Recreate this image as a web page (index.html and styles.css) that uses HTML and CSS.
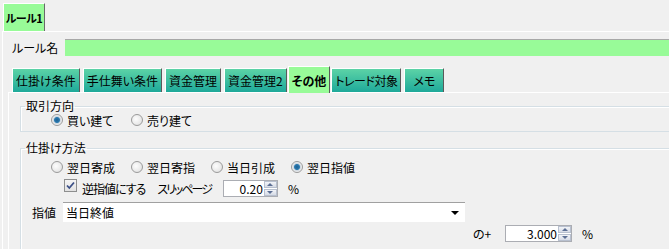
FILE: index.html
```html
<!DOCTYPE html>
<html>
<head>
    <title>ルール設定</title>
    <link rel="stylesheet" href="styles.css">
</head>
<body>
<div class="window">
    <div class="tabstrip">
        <div class="rule-tab">ルール1</div>
    </div>
    <div class="page">
        <div class="name-row">
            <span class="name-label">ルール名</span>
            <div class="name-input"></div>
        </div>
        <div class="tab-control">
            <div class="subtabs">
                <div class="subtab">仕掛け条件</div>
                <div class="subtab">手仕舞い条件</div>
                <div class="subtab">資金管理</div>
                <div class="subtab">資金管理2</div>
                <div class="subtab active">その他</div>
                <div class="subtab tight">トレード対象</div>
                <div class="subtab memo">メモ</div>
            </div>
            <div class="subpage">
                <fieldset class="group group-direction">
                    <legend>取引方向</legend>
                    <div class="radio-row">
                        <label class="radio checked"><span class="radio-mark"></span>買い建て</label>
                        <label class="radio"><span class="radio-mark"></span>売り建て</label>
                    </div>
                </fieldset>
                <fieldset class="group group-entry">
                    <legend>仕掛け方法</legend>
                    <div class="radio-row">
                        <label class="radio"><span class="radio-mark"></span>翌日寄成</label>
                        <label class="radio"><span class="radio-mark"></span>翌日寄指</label>
                        <label class="radio"><span class="radio-mark"></span>当日引成</label>
                        <label class="radio checked"><span class="radio-mark"></span>翌日指値</label>
                    </div>
                    <div class="stop-row">
                        <span class="checkbox">
                            <svg width="11" height="11" viewBox="0 0 11 11"><path d="M2 5.5 L4.3 8 L9 2.5" fill="none" stroke="#3b4f86" stroke-width="1.8"/></svg>
                        </span>
                        <span class="stop-label">逆指値にする</span>
                        <span class="slip-label">スリッページ</span>
                        <div class="spin spin-slip">
                            <span class="spin-value">0.20</span>
                            <span class="spin-buttons"><span class="spin-up"></span><span class="spin-down"></span></span>
                        </div>
                        <span class="unit">%</span>
                    </div>
                    <div class="limit-row">
                        <span class="limit-label">指値</span>
                        <div class="combo">
                            <span class="combo-text">当日終値</span>
                            <span class="combo-arrow"></span>
                        </div>
                    </div>
                    <div class="plus-row">
                        <span class="plus-label">の+</span>
                        <div class="spin spin-plus">
                            <span class="spin-value">3.000</span>
                            <span class="spin-buttons"><span class="spin-up"></span><span class="spin-down"></span></span>
                        </div>
                        <span class="unit">%</span>
                    </div>
                </fieldset>
            </div>
        </div>
    </div>
</div>
</body>
</html>
```

FILE: styles.css
```css
body {
    font-family: "Noto Sans CJK JP", "Noto Sans", sans-serif;
    font-size: 12px;
    font-feature-settings: "palt";
    background-color: #f0f0f0;
    color: #000;
    margin: 0;
    padding: 0;
    width: 669px;
    height: 249px;
    overflow: hidden;
}

.window {
    width: 760px;
}

.tabstrip {
    height: 31px;
    padding: 3px 0 0 3px;
    box-sizing: border-box;
    display: flex;
}

.rule-tab {
    width: 42px;
    height: 28px;
    box-sizing: border-box;
    background-color: #98fb98;
    border-top: 1px solid #fff;
    border-left: 1px solid #fff;
    border-right: 1px solid #696969;
    font-weight: bold;
    font-size: 11px;
    letter-spacing: -0.5px;
    white-space: nowrap;
    display: flex;
    align-items: center;
    justify-content: center;
}

.page {
    margin-left: 2px;
    border-top: 1px solid #fff;
    border-left: 1px solid #fff;
}

.name-row {
    display: flex;
    align-items: center;
    margin-top: 7px;
    padding-left: 9px;
}

.name-label {
    width: 53px;
}

.name-input {
    flex: 1;
    height: 17px;
    box-sizing: border-box;
    background-color: #98fb98;
    border-top: 1px solid #a8a8a8;
}

.tab-control {
    margin-top: 9px;
    margin-left: 5px;
}

.subtabs {
    display: flex;
    align-items: flex-end;
    height: 27px;
    padding-left: 4px;
}

.subtab {
    height: 24px;
    box-sizing: border-box;
    padding: 0 3px;
    margin-right: 3px;
    line-height: 23px;
    background: linear-gradient(#5cd3a6, #1ea99a);
    border-top: 1px solid #fff;
    border-left: 1px solid #fff;
    border-right: 1px solid #5a5a5a;
    white-space: nowrap;
}

.subtab.active {
    height: 27px;
    line-height: 27px;
    margin-left: -2px;
    margin-right: 1px;
    padding: 0 3px;
    background: #98fb98;
    font-weight: bold;
    margin-bottom: -1px;
}

.subtab.tight {
    letter-spacing: -0.5px;
}

.subtab.memo {
    padding: 0 8px;
}

.subpage {
    border-top: 1px solid #fff;
    border-left: 1px solid #fff;
    padding-top: 6px;
}

.group {
    margin: 0 0 0 11px;
    padding: 0;
    border: 1px solid #d5dfe5;
    box-shadow: inset 1px 1px 0 #fff;
}

.group legend {
    margin-left: 4px;
    padding: 0 1px;
    line-height: 14px;
    height: 14px;
}

.group-direction {
    height: 27px;
    padding-bottom: 4px;
}

.group-direction .radio-row {
    margin-top: -1px;
}

.group-entry {
    margin-top: 9px;
    height: 120px;
}

.radio-row {
    display: flex;
    align-items: center;
    height: 16px;
    padding-left: 30px;
}

.group-entry .radio-row {
    margin-top: 4px;
}

.radio {
    display: flex;
    align-items: center;
    width: 80px;
    white-space: nowrap;
}

.radio-mark {
    width: 12px;
    height: 12px;
    box-sizing: border-box;
    border-radius: 50%;
    border: 1px solid #9a9a9a;
    background: radial-gradient(circle at 40% 40%, #fdfdfd, #dcdcdc);
    margin-right: 4px;
}

.radio.checked .radio-mark {
    background: radial-gradient(circle, #1f5f8f 0, #2a7ab0 2.5px, #cfd8e0 3.5px, #f4f4f4 5px);
}

.stop-row {
    display: flex;
    align-items: center;
    height: 18px;
    margin-top: 4px;
    padding-left: 43px;
    white-space: nowrap;
}

.checkbox {
    width: 13px;
    height: 13px;
    box-sizing: border-box;
    border: 1px solid #8e8f8f;
    background: linear-gradient(#f4f4f4, #e2e2e2);
    display: flex;
    align-items: center;
    justify-content: center;
    margin-right: 5px;
    align-self: flex-start;
}

.stop-label {
    letter-spacing: -1px;
    margin-right: 12px;
}

.slip-label {
    letter-spacing: -2px;
    margin-right: 12px;
}

.spin {
    display: flex;
    align-items: center;
    height: 17px;
    box-sizing: border-box;
    background-color: #fff;
    border: 1px solid #abadb3;
}

.spin-slip {
    width: 55px;
}

.spin-plus {
    width: 67px;
    margin-left: 12px;
}

.spin-value {
    flex: 1;
    text-align: right;
    padding-right: 1px;
}

.spin-buttons {
    width: 13px;
    height: 15px;
    display: flex;
    flex-direction: column;
    gap: 1px;
}

.spin-up,
.spin-down {
    flex: 1;
    background: linear-gradient(#f2f4f8, #d6dbe6);
    border: 1px solid #b8c0cf;
    box-sizing: border-box;
    display: flex;
    align-items: center;
    justify-content: center;
}

.spin-up::after {
    content: "";
    border-left: 3px solid transparent;
    border-right: 3px solid transparent;
    border-bottom: 3px solid #5c6f94;
}

.spin-down::after {
    content: "";
    border-left: 3px solid transparent;
    border-right: 3px solid transparent;
    border-top: 3px solid #5c6f94;
}

.unit {
    margin-left: 10px;
}

.limit-row {
    display: flex;
    align-items: center;
    margin-top: 5px;
    padding-left: 11px;
}

.limit-label {
    width: 31px;
}

.combo {
    width: 402px;
    height: 20px;
    box-sizing: border-box;
    background-color: #fff;
    border-top: 1px solid #a0a0a0;
    display: flex;
    align-items: center;
    padding-left: 3px;
}

.combo-text {
    flex: 1;
}

.combo-arrow {
    width: 0;
    height: 0;
    border-left: 4px solid transparent;
    border-right: 4px solid transparent;
    border-top: 4px solid #000;
    margin-right: 6px;
}

.plus-row {
    display: flex;
    align-items: center;
    margin-top: 2px;
    padding-left: 452px;
    height: 19px;
}

.plus-label {
    width: 20px;
}
```
